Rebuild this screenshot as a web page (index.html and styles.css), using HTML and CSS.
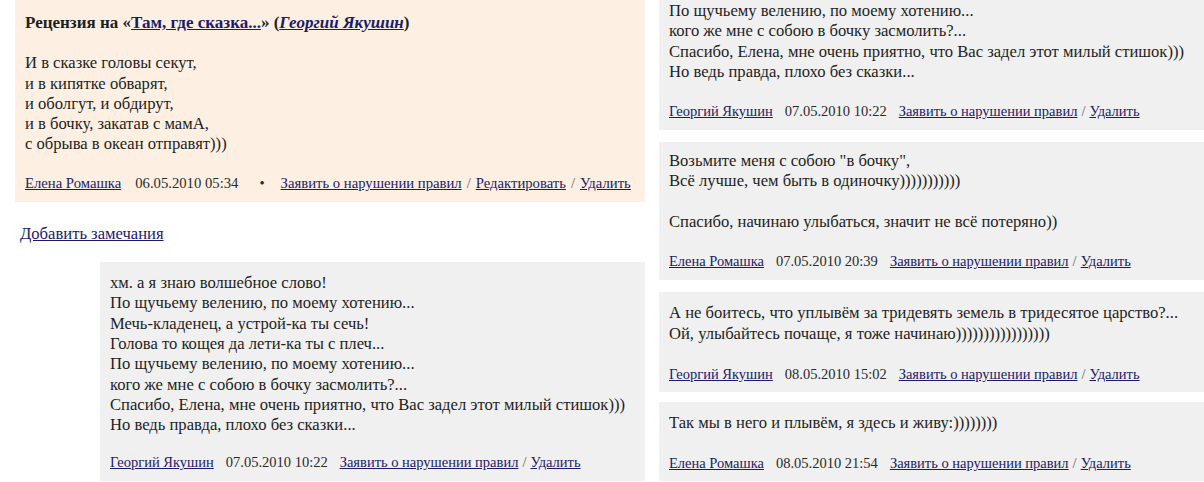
FILE: index.html
```html
<!DOCTYPE html>
<html lang="ru">
<head>
  <meta charset="UTF-8">
  <meta name="viewport" content="width=device-width, initial-scale=1.0">
  <title>Рецензия на «Там, где сказка...»</title>
  <link rel="stylesheet" href="styles.css">
</head>
<body>
  <div class="page">
    <div class="col col-left">
      <div class="review">
        <div class="review-title">Рецензия на «<a href="#">Там, где сказка...</a>» (<a href="#"><i>Георгий Якушин</i></a>)</div>
        <div class="text">
          И в сказке головы секут,<br>
          и в кипятке обварят,<br>
          и оболгут, и обдирут,<br>
          и в бочку, закатав с мамА,<br>
          с обрыва в океан отправят)))
        </div>
        <div class="meta">
          <a href="#">Елена Ромашка</a><span class="date">06.05.2010 05:34</span><span class="dot">&bull;</span><a href="#" class="first">Заявить о нарушении правил</a><span class="sep">/</span><a href="#">Редактировать</a><span class="sep">/</span><a href="#">Удалить</a>
        </div>
      </div>

      <div class="add"><a href="#">Добавить замечания</a></div>

      <div class="reply reply-inner">
        <div class="text">
          хм. а я знаю волшебное слово!<br>
          По щучьему велению, по моему хотению...<br>
          Мечь-кладенец, а устрой-ка ты сечь!<br>
          Голова то кощея да лети-ка ты с плеч...<br>
          По щучьему велению, по моему хотению...<br>
          кого же мне с собою в бочку засмолить?...<br>
          Спасибо, Елена, мне очень приятно, что Вас задел этот милый стишок)))<br>
          Но ведь правда, плохо без сказки...
        </div>
        <div class="meta">
          <a href="#">Георгий Якушин</a><span class="date">07.05.2010 10:22</span><a href="#" class="first">Заявить о нарушении правил</a><span class="sep">/</span><a href="#">Удалить</a>
        </div>
      </div>
    </div>

    <div class="col col-right">
      <div class="reply reply-cut">
        <div class="text">
          По щучьему велению, по моему хотению...<br>
          кого же мне с собою в бочку засмолить?...<br>
          Спасибо, Елена, мне очень приятно, что Вас задел этот милый стишок)))<br>
          Но ведь правда, плохо без сказки...
        </div>
        <div class="meta">
          <a href="#">Георгий Якушин</a><span class="date">07.05.2010 10:22</span><a href="#" class="first">Заявить о нарушении правил</a><span class="sep">/</span><a href="#">Удалить</a>
        </div>
      </div>

      <div class="reply">
        <div class="text">
          Возьмите меня с собою "в бочку",<br>
          Всё лучше, чем быть в одиночку)))))))))))<br>
          <br>
          Спасибо, начинаю улыбаться, значит не всё потеряно))
        </div>
        <div class="meta">
          <a href="#">Елена Ромашка</a><span class="date">07.05.2010 20:39</span><a href="#" class="first">Заявить о нарушении правил</a><span class="sep">/</span><a href="#">Удалить</a>
        </div>
      </div>

      <div class="reply reply-short">
        <div class="text">
          А не боитесь, что уплывём за тридевять земель в тридесятое царство?...<br>
          Ой, улыбайтесь почаще, я тоже начинаю)))))))))))))))))
        </div>
        <div class="meta">
          <a href="#">Георгий Якушин</a><span class="date">08.05.2010 15:02</span><a href="#" class="first">Заявить о нарушении правил</a><span class="sep">/</span><a href="#">Удалить</a>
        </div>
      </div>

      <div class="reply reply-short">
        <div class="text">
          Так мы в него и плывём, я здесь и живу:))))))))
        </div>
        <div class="meta">
          <a href="#">Елена Ромашка</a><span class="date">08.05.2010 21:54</span><a href="#" class="first">Заявить о нарушении правил</a><span class="sep">/</span><a href="#">Удалить</a>
        </div>
      </div>
    </div>
  </div>
</body>
</html>
```

FILE: styles.css
```css
html, body {
  height: 100%;
  overflow: hidden;
}
body {
  margin: 0;
  padding: 0;
  background: #fff;
  color: #1e1e1e;
  font-family: "Liberation Serif", "Times New Roman", serif;
  font-size: 16.6px;
  line-height: 20.3px;
}
a {
  color: #1b1b6a;
  text-decoration: underline;
}
.page {
  display: grid;
  grid-template-columns: 645px 1fr;
  column-gap: 14px;
  align-items: start;
}
.col-left {
  padding-left: 15px;
}
.review {
  background: #fdf0e3;
  padding: 13px 10px 9px;
}
.review-title {
  font-weight: bold;
  font-size: 17px;
}
.review .text {
  margin-top: 20px;
}
.meta {
  margin-top: 18px;
  font-size: 14.5px;
  line-height: 20px;
  color: #2a2a2a;
}
.review .meta {
  font-size: 14.7px;
}
.review .meta .date {
  margin-left: 14px;
}
.review .meta .sep {
  margin: 0 5px;
}
.date {
  margin: 0 12px 0 12px;
}
.dot {
  margin: 0 16px 0 9px;
}
.sep {
  color: #666;
  margin: 0 4px;
}
.add {
  margin: 22px 0 0 5px;
}
.reply {
  background: #f0f0f0;
  padding: 9px 10px 9px;
  margin-bottom: 12px;
}
.reply .meta {
  margin-top: 19px;
}
.reply-inner {
  margin: 18px 0 0 85px;
  padding-top: 11px;
}
.reply-inner .meta {
  margin-top: 17px;
}
.reply-cut {
  padding-top: 1px;
}
.reply-short {
  padding-top: 11px;
  padding-bottom: 8px;
}
.reply-short .meta {
  margin-top: 20px;
}
.reply-short + .reply-short {
  margin-top: -2px;
}
```
